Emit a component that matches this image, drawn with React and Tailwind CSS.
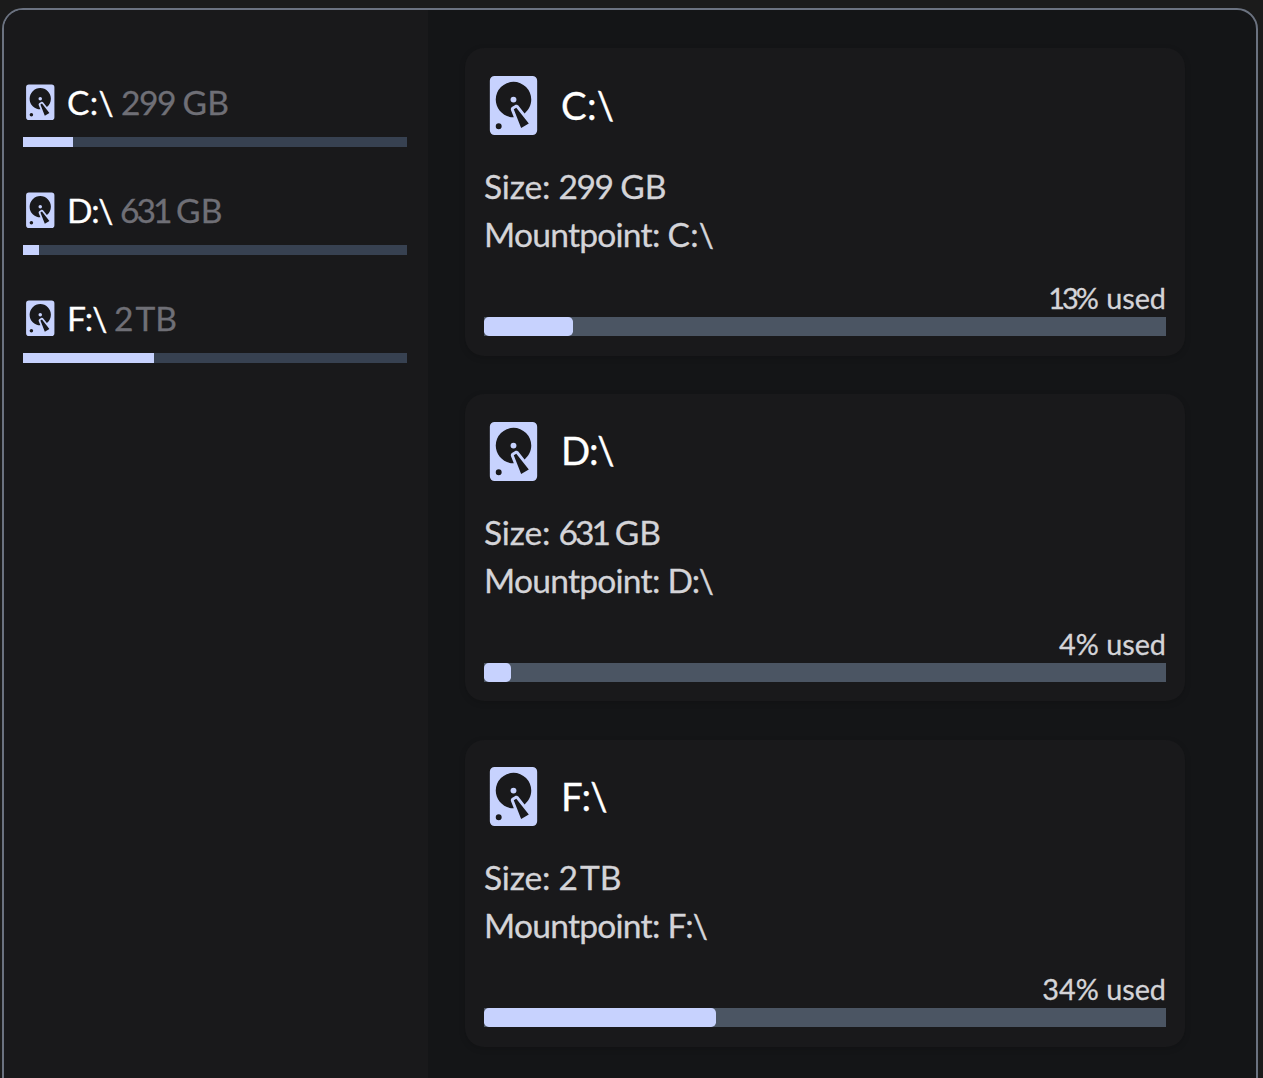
const drives = [
  {
    name: "C:\\", amount: "299", unit: "GB", used: 13,
    side: "w-[50px]", bar: "w-[89px]",
    nameSlot: "w-[54px]", nameTracking: "tracking-[0.3px]",
    amountSlot: "w-[59.5px] tracking-[-1.5px]", usedTracking: "tracking-[-3px]",
  },
  {
    name: "D:\\", amount: "631", unit: "GB", used: 4,
    side: "w-[16px]", bar: "w-[27px]",
    nameSlot: "w-[53px]", nameTracking: "tracking-[-1.3px]",
    amountSlot: "w-[54px] tracking-[-3px]", usedTracking: "tracking-normal",
  },
  {
    name: "F:\\", amount: "2", unit: "TB", used: 34,
    side: "w-[131px]", bar: "w-[232px]",
    nameSlot: "w-[47px]", nameTracking: "tracking-[-0.9px]",
    amountSlot: "w-[20px] mr-[-0.7px]", usedTracking: "tracking-normal",
  },
];

function HardDisk({ className }) {
  return (
    <svg viewBox="0 0 24 24" fill="currentColor" className={className}>
      <path d="M5.6,2H18.4A1.6,1.6 0 0,1 20,3.6V20.4A1.6,1.6 0 0,1 18.4,22H5.6A1.6,1.6 0 0,1 4,20.4V3.6A1.6,1.6 0 0,1 5.6,2M12,4A6,6 0 0,0 6,10C6,13.31 8.69,16 12.1,16L11.22,13.77C10.95,13.29 11.11,12.68 11.59,12.4L12.45,11.9C12.93,11.63 13.54,11.79 13.82,12.27L15.74,14.69C17.12,13.59 18,11.9 18,10A6,6 0 0,0 12,4M12,9A1,1 0 0,1 13,10A1,1 0 0,1 12,11A1,1 0 0,1 11,10A1,1 0 0,1 12,9M7,18A1,1 0 0,0 6,19A1,1 0 0,0 7,20A1,1 0 0,0 8,19A1,1 0 0,0 7,18M12.09,13.27L14.58,19.58L17.17,18.08L12.95,12.77L12.09,13.27Z" />
    </svg>
  );
}

function Size({ drive }) {
  return (
    <>
      <span className={"inline-block whitespace-nowrap " + drive.amountSlot}>{drive.amount}</span>{" "}
      <span className="-ml-[6.5px]">{drive.unit}</span>
    </>
  );
}

function SideItem({ drive }) {
  return (
    <div className="h-[108px]">
      <div className="flex h-12 items-center">
        <HardDisk className="-ml-[4px] size-[42.5px] shrink-0 text-[#c7d2fe]" />
        <div className="ml-[5.5px] flex items-baseline whitespace-nowrap text-[33.6px] leading-[48px] [-webkit-text-stroke:0.3px]">
          <span className={"text-white " + drive.nameSlot + " " + drive.nameTracking}>{drive.name}</span>
          <span className="text-[#6f6f76]">
            <Size drive={drive} />
          </span>
        </div>
      </div>
      <div className="mt-[11px] h-[10px] bg-[#374151]">
        <div className={"h-full bg-[#c7d2fe] " + drive.side} />
      </div>
    </div>
  );
}

function DriveCard({ drive }) {
  return (
    <div className="h-[307.2px] w-[720px] rounded-[19.2px] bg-[#19191b] px-[19px] pt-[19px] shadow-[0_2px_6px_rgba(0,0,0,0.15)]">
      <div className="flex h-[76.8px] items-center">
        <HardDisk className="-ml-[6px] -mt-[0.4px] size-[71px] shrink-0 text-[#c7d2fe]" />
        <span className={"-mt-[2px] ml-[12px] text-[38.4px] leading-[58px] text-white [-webkit-text-stroke:0.3px] " + drive.nameTracking}>
          {drive.name}
        </span>
      </div>
      <div className="mt-[18px] text-[33.6px] leading-[48px] text-[#d4d4d8] [-webkit-text-stroke:0.3px]">
        <p>
          <span className="tracking-[-0.2px]">Size: </span>
          <Size drive={drive} />
        </p>
        <p>
          <span className="tracking-[-0.75px]">Mountpoint: </span>
          <span className={drive.nameTracking}>{drive.name}</span>
        </p>
      </div>
      <div className="mt-[21px] text-right text-[28.8px] leading-[38.4px] text-[#d4d4d8] [-webkit-text-stroke:0.3px]">
        <span className={drive.usedTracking}>{drive.used}</span>% used
      </div>
      <div className="-mt-[0.6px] h-[19.2px] bg-[#4b5563]">
        <div className={"h-full rounded-[4.8px] bg-[#c7d2fe] " + drive.bar} />
      </div>
    </div>
  );
}

export default function App() {
  return (
    <div className="h-[1078px] w-[1263px] overflow-hidden bg-[#1b1b1b] pl-[2px] pt-[8px] font-['Lato',sans-serif]">
      <div className="flex h-[1090px] w-[1256px] overflow-hidden rounded-[21px] border-2 border-[#6b7280] bg-[#141517]">
        <aside className="w-[424px] shrink-0 bg-[#19191b] pl-[19px] pr-[21px] pt-[68px]">
          {drives.map((d) => (
            <SideItem key={d.name} drive={d} />
          ))}
        </aside>
        <main className="flex flex-col gap-[38.4px] pl-[37px] pt-[38.4px]">
          {drives.map((d) => (
            <DriveCard key={d.name} drive={d} />
          ))}
        </main>
      </div>
    </div>
  );
}
